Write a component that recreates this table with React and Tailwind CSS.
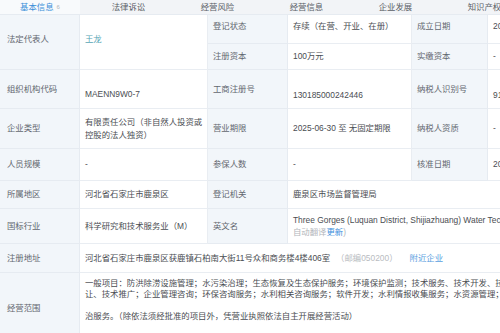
import React from 'react';

const tabs = ['法律诉讼', '经营风险', '经营信息', '企业发展', '知识产权'];

function Label({ children, className = '' }) {
  return (
    <div
      className={`flex items-center bg-[#f2f6fa] border-b border-r border-[#e6ebf1] pl-[5px] text-[#62676f] ${className}`}
    >
      {children}
    </div>
  );
}

function Value({ children, className = '', wrap = false }) {
  return (
    <div
      className={`flex items-center bg-white border-b border-r border-[#e9edf2] pl-[5px] pr-[4px] text-[#4a4d52] overflow-hidden ${
        wrap ? 'whitespace-normal' : 'whitespace-nowrap'
      } ${className}`}
    >
      {children}
    </div>
  );
}

export default function App() {
  return (
    <div
      className="w-[500px] h-[333px] overflow-hidden bg-white text-[8.4px] leading-[13px]"
      style={{ fontFamily: '"Liberation Sans", "Noto Sans CJK SC", sans-serif' }}
    >
      {/* tabs */}
      <div className="flex h-[14px] bg-[#f2f4f7] text-[#5a5e66] whitespace-nowrap">
        <div className="w-[80px] shrink-0 flex items-center justify-center gap-[3px] bg-[#f8fafc]">
          <span className="text-[#3b8fd9]">基本信息</span>
          <span className="text-[6px] text-[#b0b4ba]">6</span>
        </div>
        <div className="w-[4px] shrink-0" />
        {tabs.map((t) => (
          <div key={t} className="w-[89px] shrink-0 flex items-center justify-center">
            {t}
          </div>
        ))}
      </div>

      {/* info table */}
      <div className="grid grid-cols-[80px_128px_80px_124px_76px_90px] grid-rows-[29px_26px_39px_40px_32px_28px_35px_29px_70px] border-t border-[#e6ebf1]">
        <Label className="row-span-2 pl-[7px] pb-[6px]">法定代表人</Label>
        <Value className="row-span-2 pb-[6px] text-[#58a6b6]">王龙</Value>
        <Label className="items-start pt-[5px]">登记状态</Label>
        <Value className="items-start pt-[5px]">存续（在营、开业、在册）</Value>
        <Label className="items-start pt-[5px]">成立日期</Label>
        <Value className="items-start pt-[5px]">2025-06-30</Value>

        <Label>注册资本</Label>
        <Value>100万元</Value>
        <Label>实缴资本</Label>
        <Value>-</Value>

        <Label className="pl-[7px]">组织机构代码</Label>
        <Value className="pt-[10px]">MAENN9W0-7</Value>
        <Label>工商注册号</Label>
        <Value className="pt-[12px]">130185000242446</Value>
        <Label>纳税人识别号</Label>
        <Value className="pt-[12px]">91130185MAENN9W07X</Value>

        <Label className="pl-[7px]">企业类型</Label>
        <Value wrap>
          <span className="min-w-0">有限责任公司（非自然人投资或控股的法人独资）</span>
        </Value>
        <Label>营业期限</Label>
        <Value>2025-06-30 至 无固定期限</Value>
        <Label>纳税人资质</Label>
        <Value>-</Value>

        <Label className="pl-[7px]">人员规模</Label>
        <Value>-</Value>
        <Label>参保人数</Label>
        <Value>-</Value>
        <Label>核准日期</Label>
        <Value>2025-06-30</Value>

        <Label className="pl-[7px]">所属地区</Label>
        <Value>河北省石家庄市鹿泉区</Value>
        <Label>登记机关</Label>
        <Value className="col-span-3">鹿泉区市场监督管理局</Value>

        <Label className="pl-[7px]">国标行业</Label>
        <Value>科学研究和技术服务业（M）</Value>
        <Label>英文名</Label>
        <Value className="col-span-3 flex-col items-start justify-center leading-[12px]">
          <span>Three Gorges (Luquan District, Shijiazhuang) Water Technology Co., Ltd.</span>
          <span className="text-[#b3b6bb]">
            自动翻译<span className="text-[#3d8fdc]">更新</span>)
          </span>
        </Value>

        <Label className="pl-[7px]">注册地址</Label>
        <Value className="col-span-5">
          河北省石家庄市鹿泉区获鹿镇石柏南大街11号众和商务楼4楼406室
          <span className="ml-[6px] text-[#b9bcc1]">（邮编050200）</span>
          <span className="ml-[12px] text-[#58a0e0]">附近企业</span>
        </Value>

        <Label className="pl-[7px] pt-[2px]">经营范围</Label>
        <Value className="col-span-5 flex-col items-start justify-start pt-[5px] leading-[11px]">
          <span>一般项目：防洪除涝设施管理；水污染治理；生态恢复及生态保护服务；环境保护监测；技术服务、技术开发、技术咨询、技术交流、技术转</span>
          <span>让、技术推广；企业管理咨询；环保咨询服务；水利相关咨询服务；软件开发；水利情报收集服务；水资源管理；土壤污染治理与修复服务；水环境污染防</span>
          <span className="mt-[11px]">治服务。（除依法须经批准的项目外，凭营业执照依法自主开展经营活动）</span>
        </Value>
      </div>
    </div>
  );
}
